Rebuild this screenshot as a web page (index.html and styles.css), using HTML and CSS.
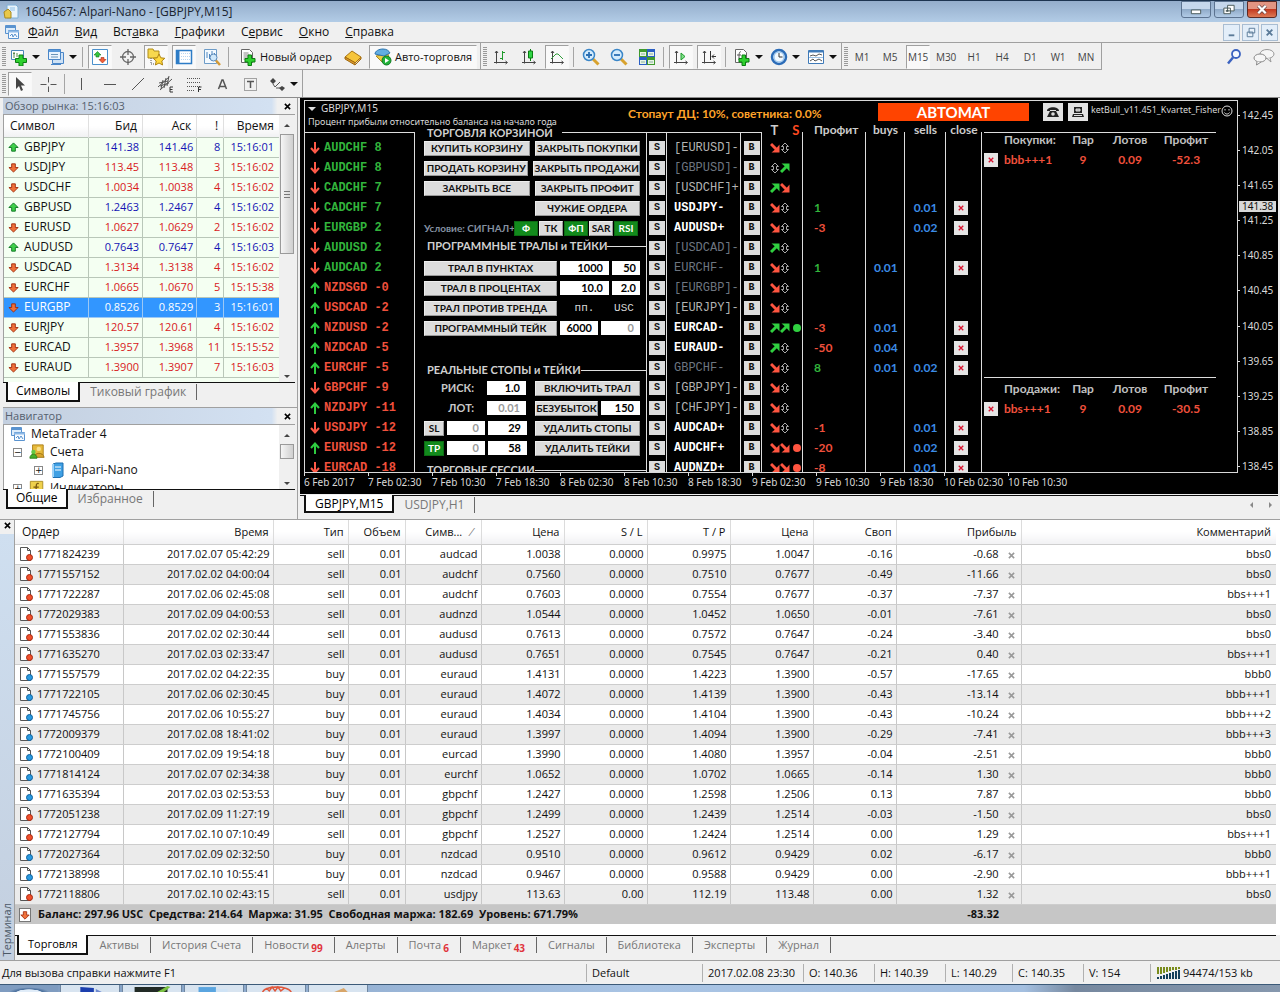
FILE: index.html
```html
<!DOCTYPE html>
<html lang="ru">
<head>
<meta charset="utf-8">
<title>1604567: Alpari-Nano - [GBPJPY,M15]</title>
<link rel="stylesheet" href="styles.css">
</head>
<body>
<svg class="sprite" aria-hidden="true">
  <symbol id="i-app" viewBox="0 0 16 16"><path d="M4 1h9l2 2v11H4z" fill="#e8f3fb" stroke="#7fb0d8"/><path d="M7 4h5M7 6h5" stroke="#8fc0e8"/><path d="M1 8l4-3 3 3v6H2z" fill="#e9c84a" stroke="#a98a20"/></symbol>
  <symbol id="i-mdi" viewBox="0 0 16 16"><path d="M1.500 1.500h10v8h-10z" fill="#dcecfb" stroke="#5a93cf"/><path d="M1 3h11" stroke="#5a93cf" stroke-width="2"/><path d="M4.500 6.500h10v8h-10z" fill="#f5faff" stroke="#5a93cf"/><path d="M4 7.500h11" stroke="#8db9e6" stroke-width="2"/><path d="M6 12l2-2 1 3 2-3 2 3" fill="none" stroke="#5a93cf"/></symbol>
  <symbol id="i-newchart" viewBox="0 0 18 18"><path d="M1.500 2.500h12v9h-12z" fill="#fff" stroke="#4a86b8"/><path d="M4 4v6M3 5.500h2M7 5v4" stroke="#5a8a4a"/><path d="M9 7h4v3.500h3.500v4H13V18H9v-3.500H5.500v-4H9z" fill="#2fd02f" stroke="#0b7d12"/></symbol>
  <symbol id="i-profiles" viewBox="0 0 18 18"><path d="M5.500 4.500h11v11h-11z" fill="#cfe2f5" stroke="#4a86c8"/><path d="M1.500 1.500h12v10h-12z" fill="#e9f4ff" stroke="#4a86c8"/><path d="M2 3h11" stroke="#5b9bdc" stroke-width="2"/><path d="M4 6.500h7M4 9h7" stroke="#6a94b8"/><path d="M4 16.500h10" stroke="#4a86c8"/></symbol>
  <symbol id="i-market" viewBox="0 0 18 18"><path d="M1.500 1.500h15v15h-15z" fill="#fff" stroke="#4a90cc"/><path d="M6.500 3.500L10 7H8v2H5V7H3z" fill="#35c43c" stroke="#167a1c" stroke-width=".6"/><path d="M11.500 15L8 11.500h2v-2h3v2h2z" fill="#f2603a" stroke="#a82a10" stroke-width=".6"/></symbol>
  <symbol id="i-cross" viewBox="0 0 18 18"><circle cx="9" cy="9" r="5.500" fill="none" stroke="#666" stroke-width="1.300"/><path d="M9 1v6M9 11v6M1 9h6M11 9h6" stroke="#666" stroke-width="1.300"/></symbol>
  <symbol id="i-navi" viewBox="0 0 18 18"><path d="M1 3V1h5l1 2h5v7H1z" fill="#f7d84e" stroke="#b08d18"/><path d="M4 10v6h4" stroke="#555" stroke-dasharray="1 1" fill="none"/><path d="M12 6l1.800 3.800 4 .5-3 2.700.8 4-3.600-2-3.600 2 .8-4-3-2.700 4-.5z" fill="#ffd93d" stroke="#b08512"/></symbol>
  <symbol id="i-term" viewBox="0 0 18 18"><path d="M1.500 2.500h15v13h-15z" fill="#fff" stroke="#2d7cc6" stroke-width="1.500"/><path d="M3 3v12" stroke="#2d7cc6" stroke-width="3"/><path d="M6 5.500h9M6 8.500h9M6 11.500h9" stroke="#b8d6f2" stroke-dasharray="1 1"/></symbol>
  <symbol id="i-tester" viewBox="0 0 18 18"><path d="M1.500 1.500h12v14h-12z" fill="#f4faff" stroke="#6d9cc8"/><path d="M4 4v6M6.500 6v5M9 3v6M11.500 5v5" stroke="#4d86c0"/><circle cx="10.500" cy="9.500" r="3.500" fill="#cfe8fb" stroke="#5a88b8"/><path d="M13 12.500l4 4.500" stroke="#d49a35" stroke-width="2.500"/></symbol>
  <symbol id="i-order" viewBox="0 0 18 18"><path d="M2.500 1.500h8l3 3v10h-11z" fill="#fff" stroke="#666"/><path d="M4.500 5h5M4.500 7h6M4.500 9h6M4.500 11h3" stroke="#888"/><path d="M9 7h3.500v3.500H16V14h-3.500v3.500H9V14H6v-3.500h3z" fill="#2fd02f" stroke="#0b7d12"/></symbol>
  <symbol id="i-book" viewBox="0 0 18 18"><path d="M1 9l7-6 9 6-6 6z" fill="#f6c53c" stroke="#a87412"/><path d="M1 9v2l10 6v-2.500zM11 17l6-6V9" fill="#d9962a" stroke="#a06a10"/></symbol>
  <symbol id="i-auto" viewBox="0 0 18 18"><path d="M2 8l6 6 7-4-1-4z" fill="#f0cb44" stroke="#a88820"/><path d="M1 6c0-3 4-5 8-5s6 2 7 4L10 8z" fill="#63aee2" stroke="#2e75ad"/><circle cx="12.500" cy="12.500" r="4.500" fill="#23b23a" stroke="#0f7a22"/><path d="M11 10l4 2.500-4 2.500z" fill="#fff"/></symbol>
  <symbol id="i-bars" viewBox="0 0 18 18"><path d="M4.500 3v12.500M2 14.500h13M3 5l1.500-2L6 5M13.500 13l2 1.500-2 1.500" fill="none" stroke="#444"/><path d="M10.500 3v9M8 10.500h2.500M10.500 4.500H13" stroke="#1f9a2b"/></symbol>
  <symbol id="i-candles" viewBox="0 0 18 18"><path d="M4.500 3v12.500M2 14.500h13M3 5l1.500-2L6 5M13.500 13l2 1.500-2 1.500" fill="none" stroke="#444"/><path d="M10.500 1v12" stroke="#0b7d12"/><path d="M8.500 3h4v7h-4z" fill="#2fd545" stroke="#0b7d12"/></symbol>
  <symbol id="i-line" viewBox="0 0 18 18"><path d="M4.500 3v12.500M2 14.500h13M3 5l1.500-2L6 5M13.500 13l2 1.500-2 1.500" fill="none" stroke="#444"/><path d="M3 11l5-5h2l5 5" fill="none" stroke="#2f9c3a"/></symbol>
  <symbol id="i-zin" viewBox="0 0 18 18"><path d="M11 11l5.500 5.500" stroke="#d8a22e" stroke-width="3"/><circle cx="7" cy="7" r="5.500" fill="#d4ecfd" stroke="#3a86c8" stroke-width="1.500"/><path d="M4 7h6M7 4v6" stroke="#2a6fb4" stroke-width="1.800"/></symbol>
  <symbol id="i-zout" viewBox="0 0 18 18"><path d="M11 11l5.500 5.500" stroke="#d8a22e" stroke-width="3"/><circle cx="7" cy="7" r="5.500" fill="#d4ecfd" stroke="#3a86c8" stroke-width="1.500"/><path d="M4 7h6" stroke="#2a6fb4" stroke-width="1.800"/></symbol>
  <symbol id="i-tile" viewBox="0 0 18 18"><path d="M1 1h8v8H1z" fill="#3f9a2e"/><path d="M9 1h8v8H9z" fill="#2a5fc4"/><path d="M1 9h8v8H1z" fill="#2a5fc4"/><path d="M9 9h8v8H9z" fill="#3f9a2e"/><path d="M2 4h6v4H2zM10 4h6v4h-6zM2 12h6v4H2zM10 12h6v4h-6z" fill="#e8f4e4"/><path d="M3 6h4M11 6h4M3 14h4M11 14h4" stroke="#8ab0a0"/></symbol>
  <symbol id="i-scroll" viewBox="0 0 18 18"><path d="M4.500 3v12.500M2 14.500h13M3 5l1.500-2L6 5M13.500 13l2 1.500-2 1.500" fill="none" stroke="#444"/><path d="M9 5v7l4-3.500z" fill="#7fe08a" stroke="#1f9a2b"/></symbol>
  <symbol id="i-shift" viewBox="0 0 18 18"><path d="M4.500 3v12.500M2 14.500h13M3 5l1.500-2L6 5M13.500 13l2 1.500-2 1.500" fill="none" stroke="#444"/><path d="M10.500 3v9M16 8.500h-4M14 6.500l-2 2 2 2" fill="none" stroke="#333"/></symbol>
  <symbol id="i-indic" viewBox="0 0 18 18"><path d="M2.500 1.500h8l3 3v10h-11z" fill="#fff" stroke="#666"/><path d="M8 4c-2-1-2 2-2 8M4 7h4" fill="none" stroke="#555"/><path d="M9 7h3.500v3.500H16V14h-3.500v3.500H9V14H6v-3.500h3z" fill="#2fd02f" stroke="#0b7d12"/></symbol>
  <symbol id="i-clock" viewBox="0 0 18 18"><circle cx="9" cy="9" r="7" fill="#f2f9ff" stroke="#2b6cb8" stroke-width="2.500"/><circle cx="9" cy="9" r="5" fill="none" stroke="#8abdec"/><path d="M9 5v4h3.500" fill="none" stroke="#333"/></symbol>
  <symbol id="i-tmpl" viewBox="0 0 18 18"><path d="M1.500 2.500h15v13h-15z" fill="#fff" stroke="#3f7ab8"/><path d="M2 3.500h14" stroke="#3f7ab8" stroke-width="2"/><path d="M3 8l3-1 3 1 3-2 3 1M3 13l3-2 2 2 4-2 3 2" fill="none" stroke="#555"/><path d="M2 9.500h14" stroke="#9cc2e6"/></symbol>
  <symbol id="i-search" viewBox="0 0 18 18"><circle cx="11" cy="6" r="4" fill="#f5f9ff" stroke="#3b62c0" stroke-width="1.800"/><path d="M8 9.500l-5 6" stroke="#3b62c0" stroke-width="2.500"/></symbol>
  <symbol id="i-chat" viewBox="0 0 24 18"><ellipse cx="15" cy="6" rx="7" ry="4.500" fill="#f6f6f6" stroke="#999"/><path d="M18 10l1 4-4-3.500" fill="#f6f6f6" stroke="#999"/><ellipse cx="8" cy="10" rx="6" ry="4" fill="#f6f6f6" stroke="#888"/><path d="M5 13.500L4.500 17 9 14" fill="#f6f6f6" stroke="#888"/></symbol>
  <symbol id="i-arrow" viewBox="0 0 18 18"><path d="M5 2v12l3-3 2 5 2-1-2-4.500h4z" fill="#444"/></symbol>
  <symbol id="i-ch" viewBox="0 0 18 18"><path d="M9.500 2v5.500M9.500 11.500V17M1.500 9.500h6M11.500 9.500h6" stroke="#555"/></symbol>
  <symbol id="i-v" viewBox="0 0 18 18"><path d="M8.500 3v12" stroke="#555"/></symbol>
  <symbol id="i-h" viewBox="0 0 18 18"><path d="M3 9.500h12" stroke="#555"/></symbol>
  <symbol id="i-d" viewBox="0 0 18 18"><path d="M3 15L15 3" stroke="#555"/></symbol>
  <symbol id="i-chan" viewBox="0 0 18 18"><path d="M1 12L12 2M3 15L15 4M2 8l9-2M3 11l9-3M6 5l-2 9M9 3l-2 10M12 1l-2 10" stroke="#555" fill="none"/><path d="M16 12h-3v5h3M13 14.500h2.500" stroke="#333" fill="none"/></symbol>
  <symbol id="i-fibo" viewBox="0 0 18 18"><path d="M2 3.500h14M2 7.500h14M2 11.500h14M2 15.500h8" stroke="#555" stroke-dasharray="1 1"/><path d="M13.500 17v-5h3M13.500 14.500H16" stroke="#333" fill="none"/></symbol>
  <symbol id="i-text" viewBox="0 0 18 18"><path d="M5.500 14L9 5h1l3.500 9M7 11.500h5" fill="none" stroke="#555" stroke-width="1.500"/></symbol>
  <symbol id="i-label" viewBox="0 0 18 18"><path d="M3.500 3.500h12v12h-12z" fill="none" stroke="#555" stroke-dasharray="1 1"/><path d="M6 6.500h7M9.500 6.500V13" stroke="#555" stroke-width="1.500"/></symbol>
  <symbol id="i-obj" viewBox="0 0 18 18"><path d="M2 6l3-3 3 3-3 3zM11 13l3-2 3 2-3 3z" fill="#444"/><path d="M5 9l2 3 5-5M8 13h4" fill="none" stroke="#555"/></symbol>
  <symbol id="i-up" viewBox="0 0 12 12"><path d="M6 1l5 5H8v4H4V6H1z" fill="#3fd04a" stroke="#0b7420" stroke-linejoin="round"/></symbol>
  <symbol id="i-down" viewBox="0 0 12 12"><path d="M6 11l5-5H8V2H4v4H1z" fill="#f0713a" stroke="#a02a0c" stroke-linejoin="round"/></symbol>
  <symbol id="s-up" viewBox="0 0 10 12"><path d="M5 12V2M1 6l4-4.500L9 6" fill="none" stroke="#2ecc40" stroke-width="2"/></symbol>
  <symbol id="s-down" viewBox="0 0 10 12"><path d="M5 0v10M1 6l4 4.500L9 6" fill="none" stroke="#ff5a48" stroke-width="2"/></symbol>
  <symbol id="t-r" viewBox="0 0 10 12"><path d="M1 2l6 6" stroke="#ff5540" stroke-width="3"/><path d="M9.500 2.500v8h-8l2.700-2.200 3-3z" fill="#ff5540"/></symbol>
  <symbol id="t-g" viewBox="0 0 10 12"><path d="M1 10l6-6" stroke="#30d040" stroke-width="3"/><path d="M9.500 9.500v-8h-8l2.700 2.200 3 3z" fill="#30d040"/></symbol>
  <symbol id="t-n" viewBox="0 0 10 12"><path d="M5 1l3.500 3.500h-2v3h2L5 11 1.500 7.500h2v-3h-2z" fill="#000" stroke="#aaa"/></symbol>
  <symbol id="i-acc" viewBox="0 0 18 18"><path d="M4 1h12v12H4z" fill="#e6b93a" stroke="#a87c15"/><circle cx="11" cy="5.500" r="2.500" fill="#f8e08a"/><path d="M6 15c0-6 10-6 11 0z" fill="#d8a52c" stroke="#9a7010"/><circle cx="5" cy="9" r="2.500" fill="#66c944"/><path d="M1 16c0-6 8-6 8 0z" fill="#45b02c" stroke="#2a7d18"/></symbol>
  <symbol id="i-server" viewBox="0 0 16 16"><path d="M3 2l3-1h7v13l-3 1.500H3z" fill="#3fa0e4" stroke="#1d6fb2"/><path d="M5 5h6M5 8h6" stroke="#fff"/><path d="M3 2v13" stroke="#9ed2f8" stroke-width="2"/></symbol>
  <symbol id="i-fx" viewBox="0 0 18 18"><path d="M1.500 1.500h14v14h-14z" fill="#eed04c" stroke="#a88a20"/><path d="M11 4c-3-1-3 2-3 8M5 8h6" fill="none" stroke="#7a5a10" stroke-width="1.500"/></symbol>
  <symbol id="i-sell" viewBox="0 0 16 16"><path d="M2.500 1.500h7l3 3v10h-10z" fill="#fff" stroke="#555"/><path d="M9.500 1.500v3h3" fill="none" stroke="#555"/><circle cx="11.500" cy="11.500" r="3" fill="#f0502a" stroke="#a82810"/></symbol>
  <symbol id="i-buy" viewBox="0 0 16 16"><path d="M2.500 1.500h7l3 3v10h-10z" fill="#fff" stroke="#555"/><path d="M9.500 1.500v3h3" fill="none" stroke="#555"/><circle cx="11.500" cy="11.500" r="3" fill="#2a9ae0" stroke="#0f609c"/></symbol>
  <symbol id="i-x" viewBox="0 0 8 8"><path d="M1 1l6 6M7 1L1 7" stroke="currentColor" stroke-width="1.800"/></symbol>
  <symbol id="i-phone" viewBox="0 0 16 16"><path d="M2 7c0-5 12-5 12 0h-3V6H5v1z" fill="#222"/><path d="M5 7h6l3 6H2z" fill="#222"/><circle cx="8" cy="10" r="1.800" fill="#ddd"/></symbol>
  <symbol id="i-pc" viewBox="0 0 16 16"><path d="M4 3h8v6H4zM3 10h10l1 3H2z" fill="#222"/><path d="M6 5h4v2H6zM4 11.500h8" stroke="#ddd" fill="#aaa"/></symbol>
  <symbol id="i-net" viewBox="0 0 24 14"><path d="M2 1v7M5 1v7M8 1v6M11 1v5M14 1v4M17 1v3M20 1v3M23 1v2" stroke="#7a8c1c" stroke-width="2"/><path d="M2 11v2M5 10v3M8 9v4M11 8v5M14 7v6M17 6v7M20 5v8M23 4v9" stroke="#15405c" stroke-width="2"/></symbol>
</svg>

<div class="window">
  <header class="titlebar">
    <svg class="ic16"><use href="#i-app"/></svg>
    <h1 class="title">1604567: Alpari-Nano - [GBPJPY,M15]</h1>
    <div class="winbtns">
      <button class="winbtn" aria-label="Свернуть"><svg viewBox="0 0 30 16"><path d="M10 8.500h10v4H10z" fill="#fff" stroke="#455"/></svg></button>
      <button class="winbtn" aria-label="Восстановить"><svg viewBox="0 0 30 16"><path d="M13.500 3.500h7v6h-7zM9.500 6.500h7v6h-7zM12 9h2v1h-2z" fill="#fff" stroke="#455"/></svg></button>
      <button class="winbtn winclose" aria-label="Закрыть"><svg viewBox="0 0 30 16"><path d="M11 4l8 8M19 4l-8 8" stroke="#644" stroke-width="4"/><path d="M11 4l8 8M19 4l-8 8" stroke="#fff" stroke-width="2.500"/></svg></button>
    </div>
  </header>

  <nav class="menubar">
    <svg class="ic16"><use href="#i-mdi"/></svg>
    <button><u>Ф</u>айл</button><button><u>В</u>ид</button><button>Вст<u>а</u>вка</button><button><u>Г</u>рафики</button><button>С<u>е</u>рвис</button><button><u>О</u>кно</button><button><u>С</u>правка</button>
    <div class="mdibtns">
      <button aria-label="Свернуть график"><svg viewBox="0 0 16 16"><path d="M5 11h6" stroke="#5a7a98" stroke-width="2"/></svg></button>
      <button aria-label="Восстановить график"><svg viewBox="0 0 16 16"><path d="M6.500 3.500h6v5h-6zM4.500 7.500h6v5h-6z" fill="#e8f1fa" stroke="#5a7a98"/></svg></button>
      <button aria-label="Закрыть график"><svg viewBox="0 0 16 16"><path d="M5 5l6 6M11 5l-6 6" stroke="#5a7a98" stroke-width="2"/></svg></button>
    </div>
  </nav>

  <div class="toolrow">
    <div class="tools">
      <i class="grip"></i>
      <button class="tool dd" aria-label="Новый график"><svg><use href="#i-newchart"/></svg></button>
      <button class="tool dd" aria-label="Профили"><svg><use href="#i-profiles"/></svg></button>
      <i class="sep"></i>
      <button class="tool on" aria-label="Обзор рынка"><svg><use href="#i-market"/></svg></button>
      <button class="tool" aria-label="Окно данных"><svg><use href="#i-cross"/></svg></button>
      <button class="tool on" aria-label="Навигатор"><svg><use href="#i-navi"/></svg></button>
      <button class="tool on" aria-label="Терминал"><svg><use href="#i-term"/></svg></button>
      <button class="tool" aria-label="Тестер"><svg><use href="#i-tester"/></svg></button>
      <i class="sep"></i>
      <button class="tool wide"><svg><use href="#i-order"/></svg>Новый ордер</button>
      <button class="tool" aria-label="Редактор"><svg><use href="#i-book"/></svg></button>
      <button class="tool wide on"><svg><use href="#i-auto"/></svg>Авто-торговля</button>
    </div>
    <div class="tools">
      <i class="grip"></i>
      <button class="tool" aria-label="Бары"><svg><use href="#i-bars"/></svg></button>
      <button class="tool" aria-label="Свечи"><svg><use href="#i-candles"/></svg></button>
      <button class="tool on" aria-label="Линия"><svg><use href="#i-line"/></svg></button>
      <i class="sep"></i>
      <button class="tool" aria-label="Увеличить"><svg><use href="#i-zin"/></svg></button>
      <button class="tool" aria-label="Уменьшить"><svg><use href="#i-zout"/></svg></button>
      <button class="tool" aria-label="Плитка"><svg><use href="#i-tile"/></svg></button>
      <i class="sep"></i>
      <button class="tool on" aria-label="Автопрокрутка"><svg><use href="#i-scroll"/></svg></button>
      <button class="tool on" aria-label="Сдвиг графика"><svg><use href="#i-shift"/></svg></button>
      <i class="sep"></i>
      <button class="tool dd" aria-label="Индикаторы"><svg><use href="#i-indic"/></svg></button>
      <button class="tool dd" aria-label="Периоды"><svg><use href="#i-clock"/></svg></button>
      <button class="tool dd" aria-label="Шаблоны"><svg><use href="#i-tmpl"/></svg></button>
    </div>
    <div class="tools periods">
      <i class="grip"></i>
      <button class="tool">M1</button><button class="tool">M5</button><button class="tool on">M15</button><button class="tool">M30</button><button class="tool">H1</button><button class="tool">H4</button><button class="tool">D1</button><button class="tool">W1</button><button class="tool">MN</button>
    </div>
    <div class="toolend">
      <button class="tool" aria-label="Поиск"><svg><use href="#i-search"/></svg></button>
      <button class="tool chat" aria-label="Сообщения"><svg><use href="#i-chat"/></svg></button>
    </div>
  </div>
  <div class="toolrow second">
    <div class="tools">
      <i class="grip"></i>
      <button class="tool on" aria-label="Курсор"><svg><use href="#i-arrow"/></svg></button>
      <button class="tool" aria-label="Перекрестие"><svg><use href="#i-ch"/></svg></button>
      <i class="sep"></i>
      <button class="tool" aria-label="Вертикальная линия"><svg><use href="#i-v"/></svg></button>
      <button class="tool" aria-label="Горизонтальная линия"><svg><use href="#i-h"/></svg></button>
      <button class="tool" aria-label="Трендовая линия"><svg><use href="#i-d"/></svg></button>
      <button class="tool" aria-label="Канал"><svg><use href="#i-chan"/></svg></button>
      <button class="tool" aria-label="Фибоначчи"><svg><use href="#i-fibo"/></svg></button>
      <button class="tool" aria-label="Текст"><svg><use href="#i-text"/></svg></button>
      <button class="tool" aria-label="Метка"><svg><use href="#i-label"/></svg></button>
      <button class="tool dd" aria-label="Стрелки"><svg><use href="#i-obj"/></svg></button>
    </div>
  </div>

  <main class="work">
    <div class="side">
      <section class="dock market">
        <div class="caption"><h2>Обзор рынка: 15:16:03</h2><button aria-label="Закрыть обзор"><svg><use href="#i-x"/></svg></button></div>
        <div class="dockbody">
          <div class="scrollarea">
            <table class="quotes">
              <colgroup><col class="q1"><col class="q2"><col class="q2"><col class="q3"><col class="q4"></colgroup>
              <thead><tr><th>Символ</th><th>Бид</th><th>Аск</th><th>!</th><th>Время</th></tr></thead>
              <tbody id="quotes"></tbody>
            </table>
          </div>
          <div class="scrollbar"><i class="su"></i><i class="thumb"></i><i class="sd"></i></div>
        </div>
        <div class="tabs"><button class="tab active">Символы</button><button class="tab">Тиковый график</button></div>
      </section>
      <section class="dock navi">
        <div class="caption"><h2>Навигатор</h2><button aria-label="Закрыть навигатор"><svg><use href="#i-x"/></svg></button></div>
        <div class="dockbody">
          <ul class="tree">
            <li><svg><use href="#i-mdi"/></svg>MetaTrader 4</li>
            <li class="lv1"><b class="box">−</b><svg><use href="#i-acc"/></svg>Счета</li>
            <li class="lv2"><b class="box">+</b><svg><use href="#i-server"/></svg>Alpari-Nano</li>
            <li class="lv1"><b class="box">+</b><svg><use href="#i-fx"/></svg>Индикаторы</li>
          </ul>
          <div class="scrollbar"><i class="su"></i><i class="thumb short"></i><i class="sd"></i></div>
        </div>
        <div class="tabs"><button class="tab active">Общие</button><button class="tab">Избранное</button></div>
      </section>
    </div>

    <section class="chartwin">
      <div class="chart">
        <div class="plot">
          <div class="charthead">
            <div class="legend"><p><i class="tri"></i>GBPJPY,M15</p><p class="note">Процент прибыли относительно баланса на начало года</p></div>
            <p class="stopout">Стопаут ДЦ: 10%, советника: 0.0%</p>
            <button class="automat">АВТОМАТ</button>
            <button class="sq" aria-label="Телефон"><svg><use href="#i-phone"/></svg></button>
            <button class="sq" aria-label="Компьютер"><svg><use href="#i-pc"/></svg></button>
            <p class="ea">ketBull_v11.451_Kvartet_Fisher</p><svg class="smile" viewBox="0 0 12 12"><circle cx="6" cy="6" r="5" fill="none" stroke="#ddd"/><path d="M4 4v1.500M8 4v1.500M3.500 7.500c1 2 4 2 5 0" fill="none" stroke="#ddd"/></svg>
          </div>
          <div class="board">
            <div class="ranks"><div class="rule"></div><ul id="ranks"></ul></div>
            <div class="panel">
              <h3 class="gap">ТОРГОВЛЯ КОРЗИНОЙ</h3>
              <div class="prow"><button>КУПИТЬ КОРЗИНУ</button><button>ЗАКРЫТЬ ПОКУПКИ</button></div>
              <div class="prow"><button>ПРОДАТЬ КОРЗИНУ</button><button>ЗАКРЫТЬ ПРОДАЖИ</button></div>
              <div class="prow"><button>ЗАКРЫТЬ ВСЕ</button><button>ЗАКРЫТЬ ПРОФИТ</button></div>
              <div class="prow"><span></span><button>ЧУЖИЕ ОРДЕРА</button></div>
              <div class="prow flags"><span>Условие: СИГНАЛ+</span><button class="lit">Ф</button><button>ТК</button><button class="lit">ФП</button><button>SAR</button><button class="lit">RSI</button></div>
              <h3>ПРОГРАММНЫЕ ТРАЛЫ и ТЕЙКИ</h3>
              <div class="prow trail"><button>ТРАЛ В ПУНКТАХ</button><input class="w49" aria-label="Трал в пунктах" value="1000"><input class="w28" aria-label="Шаг трала" value="50"></div>
              <div class="prow trail"><button>ТРАЛ В ПРОЦЕНТАХ</button><input class="w49" aria-label="Трал в процентах" value="10.0"><input class="w28" aria-label="Шаг в процентах" value="2.0"></div>
              <div class="prow trail"><button>ТРАЛ ПРОТИВ ТРЕНДА</button><span class="unit w49">пп.</span><span class="unit w28">USC</span></div>
              <div class="prow trail"><button>ПРОГРАММНЫЙ ТЕЙК</button><input class="w38" aria-label="Тейк в пунктах" value="6000"><input class="w39 dim" aria-label="Тейк в валюте" value="0"></div>
              <div class="blank"></div>
              <h3 class="low">РЕАЛЬНЫЕ СТОПЫ и ТЕЙКИ</h3>
              <div class="prow real"><label for="risk">РИСК:</label><input id="risk" class="w39" value="1.0"><button>ВКЛЮЧИТЬ ТРАЛ</button></div>
              <div class="prow real"><label for="lot">ЛОТ:</label><input id="lot" class="w39 dim" value="0.01"><div class="pair"><button>БЕЗУБЫТОК</button><input class="w39" aria-label="Безубыток" value="150"></div></div>
              <div class="prow real"><button class="tiny">SL</button><input class="w38 dim" aria-label="SL 1" value="0"><input class="w39" aria-label="SL 2" value="29"><button>УДАЛИТЬ СТОПЫ</button></div>
              <div class="prow real"><button class="tiny lit">TP</button><input class="w38 dim" aria-label="TP 1" value="0"><input class="w39" aria-label="TP 2" value="58"><button>УДАЛИТЬ ТЕЙКИ</button></div>
              <h3 class="low">ТОРГОВЫЕ СЕССИИ</h3>
            </div>
            <table class="pairs">
              <colgroup><col class="c20"><col class="c74"><col class="c21"><col class="c41"><col class="c63"><col class="c39"><col class="c41"><col class="c36"></colgroup>
              <thead><tr><th class="line"></th><th class="line"></th><th class="line"></th><th class="ts"><span>T</span><span class="s">S</span></th><th class="pl">Профит</th><th>buys</th><th>sells</th><th>close</th></tr></thead>
              <tbody id="pairs"></tbody>
            </table>
            <div class="totals">
              <table>
                <thead><tr><th></th><th>Покупки:</th><th>Пар</th><th>Лотов</th><th>Профит</th></tr></thead>
                <tbody><tr><td><button class="kill" aria-label="Закрыть покупки"><svg><use href="#i-x"/></svg></button></td><td>bbb+++1</td><td>9</td><td>0.09</td><td>-52.3</td></tr></tbody>
              </table>
              <table class="sold">
                <thead><tr><th></th><th>Продажи:</th><th>Пар</th><th>Лотов</th><th>Профит</th></tr></thead>
                <tbody><tr><td><button class="kill" aria-label="Закрыть продажи"><svg><use href="#i-x"/></svg></button></td><td>bbs+++1</td><td>9</td><td>0.09</td><td>-30.5</td></tr></tbody>
              </table>
            </div>
          </div>
        </div>
        <div class="prices"><span>142.45</span><span>142.05</span><span>141.65</span><span>141.25</span><span>140.85</span><span>140.45</span><span>140.05</span><span>139.65</span><span>139.25</span><span>138.85</span><span>138.45</span><b class="last">141.38</b></div>
        <div class="times"><span>6 Feb 2017</span><span>7 Feb 02:30</span><span>7 Feb 10:30</span><span>7 Feb 18:30</span><span>8 Feb 02:30</span><span>8 Feb 10:30</span><span>8 Feb 18:30</span><span>9 Feb 02:30</span><span>9 Feb 10:30</span><span>9 Feb 18:30</span><span>10 Feb 02:30</span><span>10 Feb 10:30</span></div>
      </div>
      <div class="tabs charttabs"><button class="tab active">GBPJPY,M15</button><button class="tab">USDJPY,H1</button><span class="nudge"><i class="lt"></i><i class="rt"></i></span></div>
    </section>
  </main>

  <section class="terminal">
    <div class="strip"><button aria-label="Закрыть терминал"><svg><use href="#i-x"/></svg></button><h2>Терминал</h2></div>
    <div class="termbody">
      <table class="orders">
        <colgroup><col class="o1"><col class="o2"><col class="o3"><col class="o4"><col class="o5"><col class="o6"><col class="o6"><col class="o6"><col class="o6"><col class="o6"><col class="o7"><col></colgroup>
        <thead><tr><th>Ордер</th><th>Время</th><th>Тип</th><th>Объем</th><th class="sorted">Симв... <i>⁄</i></th><th>Цена</th><th>S / L</th><th>T / P</th><th>Цена</th><th>Своп</th><th>Прибыль</th><th>Комментарий</th></tr></thead>
        <tbody id="orders"></tbody>
        <tfoot><tr><td colspan="10"><span class="sumicon"><svg><use href="#i-down"/></svg></span>Баланс: 297.96 USC&nbsp; Средства: 214.64&nbsp; Маржа: 31.95&nbsp; Свободная маржа: 182.69&nbsp; Уровень: 671.79%</td><td class="profit">-83.32</td><td></td></tr></tfoot>
      </table>
      <div class="tabs"><button class="tab active">Торговля</button><button class="tab">Активы</button><button class="tab">История Счета</button><button class="tab">Новости<sub>99</sub></button><button class="tab">Алерты</button><button class="tab">Почта<sub>6</sub></button><button class="tab">Маркет<sub>43</sub></button><button class="tab">Сигналы</button><button class="tab">Библиотека</button><button class="tab">Эксперты</button><button class="tab">Журнал</button></div>
    </div>
  </section>

  <footer class="status">
    <span class="help">Для вызова справки нажмите F1</span>
    <span class="s1">Default</span><span class="s2">2017.02.08 23:30</span><span class="s3">O: 140.36</span><span class="s3">H: 140.39</span><span class="s4">L: 140.29</span><span class="s3">C: 140.35</span><span class="s4">V: 154</span><span class="s5"><svg><use href="#i-net"/></svg>94474/153 kb</span>
  </footer>
  <div class="taskbar">
    <i class="orb"></i>
    <svg viewBox="0 0 60 8"><path d="M20 2l14 1v5H20z" fill="#1c3fae"/><path d="M36 4l8 4h-8z" fill="#6f8bd0"/></svg>
    <svg viewBox="0 0 60 8"><path d="M12 2h34v6H12z" fill="#222b26"/><path d="M34 8l12-7 3 1-8 6z" fill="#7ac142"/></svg>
    <svg viewBox="0 0 60 8"><path d="M14 2h18v6H14z" fill="#5aa5e0"/><path d="M32 4h12v4H32z" fill="#cfe3f5"/></svg>
    <svg viewBox="0 0 60 8"><path d="M16 8c1-8 28-8 30 0M20 3l3 3 3-4 3 4 3-4 3 4 4-3" fill="none" stroke="#e0583c" stroke-width="1.500"/></svg>
    <svg viewBox="0 0 60 8"><path d="M24 8l12-5 5 5z" fill="#d8a66a"/></svg>
  </div>
</div>
<script src="app.js"></script>
</body>
</html>
```

FILE: styles.css
```css
* { box-sizing: border-box; }
body { margin: 0; background: #f0f0f0; color: #111; font: 12px/16px "Open Sans", "Noto Sans", sans-serif; }
h1, h2, h3, p, ul { margin: 0; padding: 0; font: inherit; list-style: none; }
button, input { font: inherit; color: inherit; margin: 0; padding: 0; border: 0; background: none; border-radius: 0; }
svg { display: block; flex: none; }
table { border-collapse: collapse; border-spacing: 0; table-layout: fixed; }
th { font-weight: 400; }
th, td { padding: 0; white-space: nowrap; }
.sprite { position: absolute; width: 0; height: 0; }
.ic16 { width: 16px; height: 16px; }
.window { display: flex; flex-direction: column; height: 100vh; min-height: 900px; min-width: 1200px; overflow: hidden; }

/* title and menu */
.titlebar { display: flex; align-items: center; gap: 6px; height: 22px; padding: 0 3px; border-top: 1px solid #1d3450; background: linear-gradient(#94adcb, #b2cce6); }
.title { flex: 1; color: #1a2430; }
.winbtns { display: flex; gap: 3px; align-self: flex-start; }
.winbtn { width: 30px; height: 17px; border: 1px solid #5c7390; border-radius: 0 0 3px 3px; background: linear-gradient(#c5d7ec 45%, #90abc9 50%, #b2cbe6); }
.winbtn svg { width: 28px; height: 15px; }
.winclose { background: linear-gradient(#e39582 45%, #c43a20 50%, #dd7a55); border-color: #5d2a24; }
.menubar { display: flex; align-items: center; height: 21px; padding: 0 2px 0 4px; border-bottom: 1px solid #a0a0a0; }
.menubar > button { padding: 0 8px; }
.mdibtns { display: flex; gap: 2px; margin-left: auto; }
.mdibtns button { width: 17px; height: 17px; border: 1px solid #a9bdd2; background: #e3eef9; }
.mdibtns svg { width: 15px; height: 15px; }

/* toolbars */
.toolrow { display: flex; height: 27px; }
.tools { display: flex; align-items: center; height: 27px; padding: 1px 1px 0 2px; border-right: 1px solid #a0a0a0; border-bottom: 1px solid #a0a0a0; }
.second .tools { border-bottom: 0; }
.grip { width: 4px; height: 20px; background: repeating-linear-gradient(#999 0 1px, #f0f0f0 1px 2px); }
.sep { width: 1px; height: 20px; margin: 0 3px 0 2px; background: #a5a5a5; }
.tool { display: flex; align-items: center; justify-content: center; width: 24px; height: 24px; margin: 0 2px; border: 1px solid transparent; }
.tool svg { width: 18px; height: 18px; }
.tool.on { background: #f9f9f9; border-color: #a0a0a0 #f8f8f8 #f8f8f8 #a0a0a0; }
.tool.dd { width: 33px; gap: 4px; }
.tool.dd::after { content: ""; border: 4px solid transparent; border-top-color: #111; border-bottom: 0; }
.tool.wide { width: auto; gap: 3px; padding: 0 4px; font-size: 11px; }
.periods .tool { font-size: 10px; color: #444; }
.toolend { display: flex; align-items: center; gap: 2px; margin-left: auto; padding-right: 2px; }
.tool.chat svg { width: 24px; }

/* docked windows */
.work { display: flex; flex: 1 1 0; min-height: 0; border-top: 1px solid #8c8c8c; }
.side { display: flex; flex-direction: column; flex: none; width: 298px; padding: 0 0 9px 3px; border-right: 1px solid #a0a0a0; }
.dock { display: flex; flex-direction: column; padding-right: 2px; }
.market { flex: 1; min-height: 0; }
.navi { flex: none; margin-top: 4px; border-top: 1px solid #a0a0a0; }
.caption { display: flex; align-items: center; justify-content: space-between; height: 16px; flex: none; padding: 0 4px 0 2px; color: #55606e; background: linear-gradient(90deg, #c3cfdf, #d3e1f2 92%, #f0f0f0 94%); }
.caption svg, .strip svg { width: 7px; height: 7px; color: #000; }
.caption h2 { font-size: 11px; }
.dockbody { display: flex; flex: 1; min-height: 0; background: #fff; border: 1px solid #a0a0a0; border-bottom: 0; border-right: 0; }
.scrollarea { flex: 1; overflow: hidden; background: #f4fff2; }
.navi .dockbody { height: 65px; flex: none; }
.scrollbar { display: flex; flex-direction: column; align-items: center; width: 16px; flex: none; background: #f0f0f0; padding: 9px 0 4px; }
.su, .sd { border: 3px solid transparent; }
.su { border-bottom-color: #444; border-top: 0; margin-bottom: 7px; }
.sd { border-top-color: #444; border-bottom: 0; margin-top: auto; }
.thumb { width: 14px; height: 120px; border: 1px solid #9a9a9a; background: repeating-linear-gradient(#777 0 1px, transparent 1px 3px) center / 6px 7px no-repeat, linear-gradient(90deg, #f5f5f5, #cfcfcf); }
.thumb.short { height: 15px; background: linear-gradient(90deg, #f5f5f5, #cfcfcf); }
.quotes { width: 100%; }
.q1 { width: 84px; } .q2 { width: 54px; } .q3 { width: 27px; } .q4 { width: 55px; }
.quotes th { height: 22px; text-align: right; padding-right: 5px; border-right: 1px solid #e0e0e0; background: linear-gradient(#fff 50%, #f1f1f3); }
.quotes th:first-child { text-align: left; padding-left: 6px; }
.quotes td { height: 20px; text-align: right; padding-right: 3px; border: 1px solid #b9c7b9; border-left: 0; font-size: 11px; color: #d8201c; }
.quotes td:first-child { text-align: left; padding-left: 4px; color: #111; font-size: 12px; }
.quotes td svg { display: inline-block; width: 11px; height: 11px; margin-right: 5px; vertical-align: -2px; }
.quotes .rise td + td { color: #1414b4; }
.quotes .picked td, .quotes .picked td:first-child { background: #3296ff; color: #fff; border-color: #9cc8f5; }
.quotes td:last-child, .quotes th:last-child { border-right: 0; }
.quotes td:last-child { padding-right: 5px; }
.tabs { display: flex; height: 21px; flex: none; padding-left: 3px; color: #777; background: linear-gradient(#111, #111) 0 0 / 100% 1px no-repeat; }
.tab { height: 16px; margin-top: 2px; padding: 0 10px; border-right: 1px solid #666; white-space: nowrap; line-height: 16px; }
.tab.active { height: 20px; margin: 0; padding: 0 8px; color: #000; background: #fff; border: 2px solid #111; border-width: 0 2px 2px; }
.tab sub { margin-left: 2px; font-size: 10px; line-height: 0; font-weight: 700; color: #e0343c; vertical-align: -3px; }
.tree { flex: 1; overflow: hidden; padding-left: 6px; }
.tree li { display: flex; align-items: center; gap: 5px; height: 18px; white-space: nowrap; }
.tree svg { width: 16px; height: 16px; }
.tree .lv1 { padding-left: 3px; }
.tree .lv2 { padding-left: 24px; }
.tree .lv1 svg { margin-left: 2px; }
.tree .lv2 svg { margin-left: 2px; }
.box { width: 9px; height: 9px; border: 1px solid #888; font: 9px/6px "DejaVu Sans", sans-serif; text-align: center; background: #fff; }

/* chart window */
.chartwin { display: flex; flex-direction: column; flex: 1; min-width: 0; padding: 0 2px 5px; }
.chart { display: grid; grid-template: minmax(0, 1fr) 21px / minmax(0, 1fr) 40px; flex: 1; min-height: 0; margin-bottom: 1px; padding: 2px 0 0 4px; background: #000; color: #d8d8d8; font: 10px/13px "Noto Sans", sans-serif; }
.plot { display: flex; flex-direction: column; min-height: 0; border: 1px solid #d8d8d8; }
.charthead { display: flex; height: 21px; flex: none; padding: 1px 4px 0 3px; }
.legend { width: 320px; height: 21px; flex: none; white-space: nowrap; }
.legend .note { font-size: 9px; }
.tri { display: inline-block; margin-right: 5px; border: 4px solid transparent; border-top-color: #ddd; border-bottom: 0; vertical-align: 1px; }
.stopout { width: 250px; flex: none; padding-top: 4px; color: #ffa42a; font: 700 12px/16px Lato, sans-serif; white-space: nowrap; }
.automat { width: 151px; height: 18px; flex: none; margin: 1px 14px 0 0; background: #ff4400; color: #fff; font: 700 15px/18px Lato, sans-serif; }
.sq { width: 20px; height: 18px; flex: none; margin: 1px 5px 0 0; padding: 1px 2px; background: #e2e2e2; }
.sq + .sq { margin-right: 0; }
.sq svg { width: 16px; height: 16px; }
.ea { margin: 0 0 0 auto; white-space: nowrap; font-size: 9px; line-height: 16px; }
.smile { width: 12px; height: 12px; margin-top: 3px; }
.board { display: flex; flex: 1; min-height: 0; overflow: hidden; }
.ranks { width: 110px; flex: none; background: linear-gradient(#ddd, #ddd) right 10px / 1px 100% no-repeat; }
.rule { height: 16px; background: linear-gradient(#ddd, #ddd) 0 10px / 100% 1px no-repeat; }
.ranks li { display: flex; align-items: center; gap: 4px; height: 20px; padding-left: 5px; font: 700 12px/20px "Liberation Mono", monospace; color: #32b43c; white-space: pre; }
.ranks .neg { color: #f0503c; }
.ranks svg { width: 10px; height: 12px; }
.panel { width: 232px; flex: none; padding: 0 7px 0 9px; background: linear-gradient(#ddd, #ddd) right 10px / 1px 100% no-repeat; font: 700 11px/14px Lato, sans-serif; }
.panel h3 { display: flex; align-items: center; height: 20px; margin-right: -7px; padding: 0 0 4px 3px; white-space: nowrap; color: #d0d0d0; }
.panel h3::after { content: ""; flex: 1; height: 1px; background: #ddd; }
.panel h3.gap { height: 16px; padding-bottom: 0; padding-top: 5px; gap: 9px; }
.panel h3.low { padding: 4px 0 0 3px; }
.prow { display: grid; grid-template-columns: 1fr 1fr; gap: 5px; align-items: center; height: 20px; white-space: nowrap; }
.blank { height: 20px; }
.prow button { height: 15px; background: #dcdcdc; border: 1px solid #eee; border-right-color: #999; border-bottom-color: #999; color: #111; font-size: 10px; line-height: 12px; }
.prow button.lit { background: #128a1c; border-color: #0c6c14; color: #fff; }
.prow input { height: 14px; padding-right: 6px; background: #fff; color: #000; text-align: right; }
.prow input.dim { color: #999; }
.prow .w28 { width: 28px; } .prow .w38 { width: 38px; } .prow .w39 { width: 39px; } .prow .w49 { width: 49px; }
.prow .w28 { padding-right: 4px; }
.flags { display: flex; gap: 1px; font-size: 10px; }
.flags span { width: 89px; flex: none; color: #8490a0; }
.flags button { width: 24px; }
.trail, .real { display: flex; gap: 3px; }
.trail button { flex: 1; }
.unit { font-family: "Liberation Mono", monospace; font-weight: 400; text-align: center; }
.real label { width: 60px; flex: none; padding-right: 10px; text-align: right; color: #c8c8c8; }
.real .tiny { width: 20px; flex: none; padding: 0; margin: 0; }
.real > button:last-child, .pair { width: 105px; margin-left: auto; }
.pair { display: flex; gap: 3px; }
.pair button { flex: 1; }
.pairs { width: 335px; flex: none; align-self: flex-start; }
.c20 { width: 20px; } .c21 { width: 21px; } .c36 { width: 36px; } .c39 { width: 39px; } .c41 { width: 41px; } .c63 { width: 63px; } .c74 { width: 74px; }
.pairs th { height: 16px; background: linear-gradient(#ddd, #ddd) right 10px / 1px 100% no-repeat; font: 700 12px/14px Lato, sans-serif; color: #ccc; }
.pairs th.line { background: linear-gradient(#ddd, #ddd) right 10px / 1px 100% no-repeat, linear-gradient(#ddd, #ddd) 0 10px / 100% 1px no-repeat; }
.pairs .ts span { padding: 0 7px; font-size: 13px; }
.pairs .ts .s { color: #ff4a20; padding-right: 2px; }
.pairs .pl { text-align: left; padding-left: 11px; }
.pairs td { height: 20px; background: linear-gradient(#ddd, #ddd) right 0 / 1px 100% no-repeat; font: 700 12px/18px Lato, sans-serif; color: #3c8ce6; text-align: center; }
.pairs .name { text-align: left; padding-left: 7px; font: 700 12px/18px "Liberation Mono", monospace; color: #fff; }
.pairs .name.soft { color: #b4b4b4; font-weight: 400; }
.pairs .name.faint { color: #6e7680; font-weight: 400; }
.pairs .res { text-align: left; padding-left: 11px; color: #f0503c; }
.pairs .res.plus { color: #32b43c; }
.pairs .buy { text-align: left; padding-left: 8px; }
.marks { display: flex; align-items: center; padding-left: 8px; }
.marks svg { width: 10px; height: 12px; }
.marks i { width: 8px; height: 8px; margin-left: 3px; border-radius: 50%; background: #ff5540; }
.marks i.g { background: #30d040; }
.key { display: block; width: 16px; height: 14px; margin: 0 auto; background: #dcdcdc; color: #111; font: 700 10px/14px "Liberation Mono", monospace; }
.kill { display: flex; align-items: center; justify-content: center; width: 14px; height: 14px; margin: 0 auto; background: #e4e4e4; color: #d81430; }
.pairs .kill { margin: 0 0 0 8px; }
.kill svg { width: 6px; height: 6px; }
.totals { display: grid; grid-template-rows: 245fr 95fr; flex: 1; padding: 10px 21px 0 2px; }
.totals table { width: 232px; align-self: start; border-top: 1px solid #ddd; font: 700 12px/14px Lato, sans-serif; }
.totals th { height: 14px; color: #c0c0c0; font-weight: 700; }
.totals .sold th { padding-top: 4px; }
.totals td { height: 25px; text-align: center; color: #f0503c; }
.totals th:nth-child(1) { width: 12px; }
.totals th:nth-child(2) { width: 66px; }
.totals th:nth-child(3) { width: 42px; }
.totals th:nth-child(4) { width: 52px; }
.totals th:nth-child(2), .totals td:nth-child(2) { text-align: left; padding-left: 8px; }
.prices { position: relative; display: flex; flex-direction: column; justify-content: space-between; padding: 9px 0 0; }
.prices span { display: flex; align-items: center; gap: 2px; height: 12px; font-size: 10px; }
.prices span::before { content: ""; width: 2px; height: 1px; background: #ddd; }
.prices .last { position: absolute; left: 1px; right: 2px; top: 27%; height: 11px; padding-left: 3px; background: #d8d8d8; color: #111; font-weight: 400; line-height: 11px; }
.times { display: flex; grid-column: 1 / -1; }
.times span { width: 64px; flex: none; white-space: nowrap; padding-top: 3px; background: linear-gradient(#ddd, #ddd) 0 0 / 1px 3px no-repeat; }
.charttabs { height: 19px; padding-left: 4px; }
.charttabs .tab.active { height: 18px; padding: 0 9px; line-height: 18px; }
.nudge { display: flex; align-items: center; gap: 16px; margin-left: auto; padding-right: 6px; }
.nudge i { border: 3px solid transparent; }
.nudge .lt { border-right-color: #888; border-left: 0; }
.nudge .rt { border-left-color: #888; border-right: 0; }

/* terminal */
.terminal { display: flex; flex: none; border-top: 1px solid #a0a0a0; }
.strip { display: flex; flex-direction: column; justify-content: space-between; align-items: center; width: 15px; flex: none; padding-bottom: 4px; background: linear-gradient(#f0f0f0 14px, #cfdff0 14px, #c3cfdf); border-right: 1px solid #a0a0a0; }
.strip button { height: 10px; }
.strip h2 { writing-mode: vertical-rl; transform: rotate(180deg); color: #4b5866; font-size: 11px; line-height: 14px; }
.termbody { flex: 1; min-width: 0; padding-right: 4px; background: #fff linear-gradient(#f0f0f0, #f0f0f0) 0 100% / 100% 25px no-repeat; }
.orders { width: 100%; margin-bottom: 11px; background: #fff; }
.o1 { width: 108px; } .o2 { width: 150px; } .o3 { width: 75px; } .o4 { width: 57px; } .o5 { width: 76px; } .o6 { width: 83px; } .o7 { width: 125px; }
.orders th { height: 24px; padding-right: 5px; text-align: right; border-right: 1px solid #dcdcdc; border-bottom: 1px solid #cfcfcf; background: linear-gradient(#fff 50%, #f1f1f3); }
.orders th:first-child { text-align: left; padding-left: 7px; }
.orders th:nth-child(n+2) { padding-right: 4px; font-size: 11px; }
.orders .sorted i { padding: 0 4px 0 6px; color: #777; }
.orders td { height: 20px; padding-right: 3px; text-align: right; border-right: 1px solid #c8c8c8; border-bottom: 1px solid #cdcdcd; font-size: 11px; }
.orders tbody tr:nth-child(even) { background: #ebebeb; }
.orders td:first-child { text-align: left; padding-left: 3px; }
.orders td svg { display: inline-block; width: 16px; height: 16px; vertical-align: -4px; margin-right: 3px; }
.orders .profit { padding-right: 5px; }
.orders td .x { width: 7px; height: 7px; margin: 0 1px 0 9px; color: #999; vertical-align: -1px; }
.orders tr > :last-child { padding-right: 5px; border-right: 0; }
.orders tfoot td { background: #c6c6c6; border: 0; font-weight: 700; }
.orders tfoot .profit { padding-right: 22px; }
.sumicon { display: inline-block; width: 12px; height: 14px; margin: 0 7px 0 1px; background: #fff; border: 1px solid #777; vertical-align: middle; }
.orders .sumicon svg { display: block; width: 10px; height: 10px; margin-top: 1px; }
.terminal .tabs { padding-left: 2px; height: 25px; font-size: 11px; }
.terminal .tab { padding: 0 11px; }
.terminal .tab.active { padding: 0 9px; line-height: 18px; }

/* status bar */
.status { display: flex; align-items: center; height: 24px; flex: none; border-top: 1px solid #a0a0a0; font-size: 11px; white-space: nowrap; }
.status span { height: 18px; line-height: 18px; padding-left: 5px; border-left: 1px solid #b0b0b0; }
.status .help { flex: 1; padding-left: 2px; border: 0; }
.status .s1 { width: 116px; } .status .s2 { width: 101px; } .status .s3 { width: 71px; } .status .s4 { width: 67px; }
.status .s5 { display: flex; align-items: center; gap: 3px; width: 130px; }
.status svg { width: 24px; height: 14px; }
.taskbar { display: flex; gap: 2px; height: 8px; flex: none; overflow: hidden; border-top: 1px solid #3c5a78; background: linear-gradient(90deg, #7f9cc0, #a9c4e4 50%, #a4bfe0 80%, #76889f 84%, #8698ae); }
.taskbar svg { width: 60px; height: 8px; background: #d8e4f0; border: 1px solid #6f86a0; border-width: 0 1px; }
.orb { width: 58px; height: 8px; background: radial-gradient(ellipse at 50% 100%, #e0ecf8 0 30%, #4a6f9c 34%, #7f9cc0 50%); }
```

FILE: app.js
```js
const use = (id, cls = "") => `<svg class="${cls}"><use href="#${id}"/></svg>`;
const rows = (text) => text.trim().split("\n").map((line) => line.trim().split("|"));
const fill = (id, list, render) => {
  document.getElementById(id).innerHTML = list.map(render).join("");
};

fill("quotes", rows(`
  GBPJPY|141.38|141.46|8|15:16:01|rise
  USDJPY|113.45|113.48|3|15:16:02|
  USDCHF|1.0034|1.0038|4|15:16:02|
  GBPUSD|1.2463|1.2467|4|15:16:02|rise
  EURUSD|1.0627|1.0629|2|15:16:02|
  AUDUSD|0.7643|0.7647|4|15:16:03|rise
  USDCAD|1.3134|1.3138|4|15:16:02|
  EURCHF|1.0665|1.0670|5|15:15:38|
  EURGBP|0.8526|0.8529|3|15:16:01|picked
  EURJPY|120.57|120.61|4|15:16:02|
  EURCAD|1.3957|1.3968|11|15:15:52|
  EURAUD|1.3900|1.3907|7|15:16:03|
`), ([name, bid, ask, spread, time, state]) =>
  `<tr class="${state}"><td>${use(state === "rise" ? "i-up" : "i-down")}${name}</td><td>${bid}</td><td>${ask}</td><td>${spread}</td><td>${time}</td></tr>`);

fill("ranks", rows(`
  down|AUDCHF 8
  down|AUDCHF 8
  down|CADCHF 7
  down|CADCHF 7
  down|EURGBP 2
  down|AUDUSD 2
  down|AUDCAD 2
  up|NZDSGD -0
  up|USDCAD -2
  up|NZDUSD -2
  up|NZDCAD -5
  up|EURCHF -5
  down|GBPCHF -9
  up|NZDJPY -11
  down|USDJPY -12
  up|EURUSD -12
  down|EURCAD -18
`), ([dir, text]) => `<li class="${text.includes("-") ? "neg" : ""}">${use("s-" + dir)}${text}</li>`);

fill("pairs", rows(`
  [EURUSD]-|soft|rn|||
  [GBPUSD]-|faint|ng|||
  [USDCHF]+|soft|gr|||
  USDJPY-||rn|1||0.01
  AUDUSD+||rn|-3||0.02
  [USDCAD]-|faint|gn|||
  EURCHF-|faint|rn|1|0.01|
  [EURGBP]-|faint|rn|||
  [EURJPY]-|soft|rn|||
  EURCAD-||gg|-3|0.01|
  EURAUD-||gn|-50|0.04|
  GBPCHF-|faint|rn|8|0.01|0.02
  [GBPJPY]-|soft|rn|||
  [CHFJPY]-|soft|rn|||
  AUDCAD+||rn|-1||0.01
  AUDCHF+||rr|-20||0.02
  AUDNZD+||rr|-8||0.01
`), ([name, tone, marks, profit, buys, sells]) => {
  const dot = marks[0] === marks[1] ? `<i class="${marks[0]}"></i>` : "";
  const close = profit ? `<button class="kill" aria-label="Закрыть ${name}">${use("i-x")}</button>` : "";
  return `<tr><td><button class="key">S</button></td><td class="name ${tone}">${name}</td><td><button class="key">B</button></td>` +
    `<td><div class="marks">${use("t-" + marks[0])}${use("t-" + marks[1])}${dot}</div></td>` +
    `<td class="res ${profit.startsWith("-") ? "" : "plus"}">${profit}</td><td class="buy">${buys}</td><td>${sells}</td><td>${close}</td></tr>`;
});

fill("orders", rows(`
  1771824239|2017.02.07 05:42:29|sell|0.01|audcad|1.0038|0.0000|0.9975|1.0047|-0.16|-0.68|bbs0
  1771557152|2017.02.02 04:00:04|sell|0.01|audchf|0.7560|0.0000|0.7510|0.7677|-0.49|-11.66|bbs0
  1771722287|2017.02.06 02:45:08|sell|0.01|audchf|0.7603|0.0000|0.7554|0.7677|-0.37|-7.37|bbs+++1
  1772029383|2017.02.09 04:00:53|sell|0.01|audnzd|1.0544|0.0000|1.0452|1.0650|-0.01|-7.61|bbs0
  1771553836|2017.02.02 02:30:44|sell|0.01|audusd|0.7613|0.0000|0.7572|0.7647|-0.24|-3.40|bbs0
  1771635270|2017.02.03 02:33:47|sell|0.01|audusd|0.7651|0.0000|0.7545|0.7647|-0.21|0.40|bbs+++1
  1771557579|2017.02.02 04:22:35|buy|0.01|euraud|1.4131|0.0000|1.4223|1.3900|-0.57|-17.65|bbb0
  1771722105|2017.02.06 02:30:45|buy|0.01|euraud|1.4072|0.0000|1.4139|1.3900|-0.43|-13.14|bbb+++1
  1771745756|2017.02.06 10:55:27|buy|0.01|euraud|1.4034|0.0000|1.4104|1.3900|-0.43|-10.24|bbb+++2
  1772009379|2017.02.08 18:41:02|buy|0.01|euraud|1.3997|0.0000|1.4094|1.3900|-0.29|-7.41|bbb+++3
  1772100409|2017.02.09 19:54:18|buy|0.01|eurcad|1.3990|0.0000|1.4080|1.3957|-0.04|-2.51|bbb0
  1771814124|2017.02.07 02:34:38|buy|0.01|eurchf|1.0652|0.0000|1.0702|1.0665|-0.14|1.30|bbb0
  1771635394|2017.02.03 02:53:53|buy|0.01|gbpchf|1.2427|0.0000|1.2598|1.2506|0.13|7.87|bbb0
  1772051238|2017.02.09 11:27:19|sell|0.01|gbpchf|1.2499|0.0000|1.2439|1.2514|-0.03|-1.50|bbs0
  1772127794|2017.02.10 07:10:49|sell|0.01|gbpchf|1.2527|0.0000|1.2424|1.2514|0.00|1.29|bbs+++1
  1772027364|2017.02.09 02:32:50|buy|0.01|nzdcad|0.9510|0.0000|0.9612|0.9429|0.02|-6.17|bbb0
  1772138998|2017.02.10 10:55:41|buy|0.01|nzdcad|0.9467|0.0000|0.9588|0.9429|0.00|-2.90|bbb+++1
  1772118806|2017.02.10 02:43:15|sell|0.01|usdjpy|113.63|0.00|112.19|113.48|0.00|1.32|bbs0
`), ([id, time, type, ...rest]) => {
  const note = rest.pop();
  const profit = rest.pop();
  return `<tr><td>${use("i-" + type)}${id}</td><td>${time}</td><td>${type}</td>` +
    rest.map((v) => `<td>${v}</td>`).join("") +
    `<td class="profit">${profit}${use("i-x", "x")}</td><td>${note}</td></tr>`;
});
```
